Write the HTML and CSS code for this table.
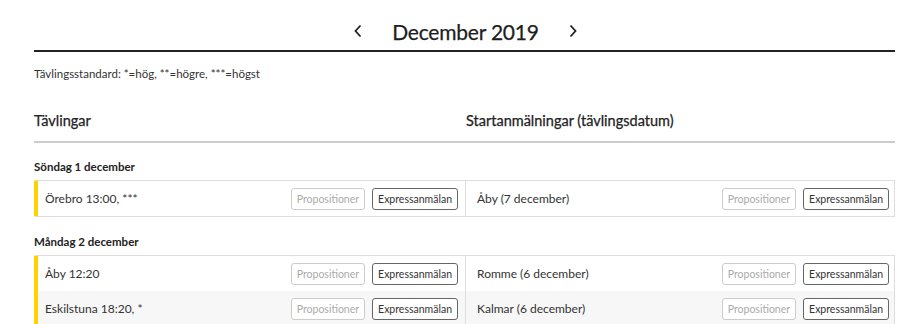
FILE: index.html
```html
<!DOCTYPE html>
<html lang="sv">
<head>
<meta charset="utf-8">
<link rel="stylesheet" href="styles.css">
</head>
<body>
<div class="page">
  <div class="month-nav">
    <span class="chev"><svg width="10" height="14" viewBox="0 0 10 14"><path d="M7.5 1.5 L2.5 7 L7.5 12.5" fill="none" stroke="#222" stroke-width="1.8"/></svg></span>
    <h1 class="month">December 2019</h1>
    <span class="chev"><svg width="10" height="14" viewBox="0 0 10 14"><path d="M2.5 1.5 L7.5 7 L2.5 12.5" fill="none" stroke="#222" stroke-width="1.8"/></svg></span>
  </div>
  <p class="legend">Tävlingsstandard: *=hög, **=högre, ***=högst</p>

  <div class="cols-head">
    <div class="col-title">Tävlingar</div>
    <div class="col-title">Startanmälningar (tävlingsdatum)</div>
  </div>

  <div class="day">Söndag 1 december</div>
  <div class="group">
    <div class="row">
      <div class="cell left"><span class="name">Örebro 13:00, ***</span><span class="btns"><span class="btn dis">Propositioner</span><span class="btn">Expressanmälan</span></span></div>
      <div class="cell right"><span class="name">Åby (7 december)</span><span class="btns"><span class="btn dis">Propositioner</span><span class="btn">Expressanmälan</span></span></div>
    </div>
  </div>

  <div class="day">Måndag 2 december</div>
  <div class="group">
    <div class="row">
      <div class="cell left"><span class="name">Åby 12:20</span><span class="btns"><span class="btn dis">Propositioner</span><span class="btn">Expressanmälan</span></span></div>
      <div class="cell right"><span class="name">Romme (6 december)</span><span class="btns"><span class="btn dis">Propositioner</span><span class="btn">Expressanmälan</span></span></div>
    </div>
    <div class="row alt">
      <div class="cell left"><span class="name">Eskilstuna 18:20, *</span><span class="btns"><span class="btn dis">Propositioner</span><span class="btn">Expressanmälan</span></span></div>
      <div class="cell right"><span class="name">Kalmar (6 december)</span><span class="btns"><span class="btn dis">Propositioner</span><span class="btn">Expressanmälan</span></span></div>
    </div>
  </div>
</div>
</body>
</html>
```
FILE: styles.css
```css
* { box-sizing: border-box; }
body {
  margin: 0;
  font-family: Lato, "Noto Sans", sans-serif;
  color: #222;
  background: #fff;
}
.page {
  margin-left: 34px;
  width: 861px;
}
.month-nav {
  height: 52px;
  border-bottom: 2px solid #222;
  display: flex;
  align-items: center;
  justify-content: center;
  gap: 29px;
  padding-top: 12px;
  padding-left: 2px;
}
.chev { display: flex; align-items: center; }
.month {
  margin: 0;
  font-size: 21px;
  font-weight: 400;
  letter-spacing: -0.2px;
  color: #1e1e1e;
  -webkit-text-stroke: 0.25px #1e1e1e;
}
.legend {
  margin: 14px 0 0;
  font-size: 11.5px;
  color: #333;
  line-height: 16px;
}
.cols-head {
  margin-top: 25px;
  display: grid;
  grid-template-columns: 432px 1fr;
  border-bottom: 2px solid #ccc;
  height: 36px;
  padding-top: 5px;
}
.col-title {
  font-size: 14.5px;
  font-weight: 400;
  color: #222;
  -webkit-text-stroke: 0.25px #222;
  letter-spacing: 0;
}
.day {
  margin-top: 16px;
  font-size: 11.5px;
  font-weight: 700;
  height: 21px;
  line-height: 16px;
}
.group {
  border: 1px solid #ddd;
  border-left: 4px solid #ffd200;
  border-radius: 2px 0 0 2px;
}
.group + .day { margin-top: 17px; }
.row {
  display: grid;
  grid-template-columns: 428px 1fr;
  height: 35px;
  background: #fff;
}
.row.alt { background: #f7f7f7; }
.cell {
  display: flex;
  align-items: center;
  justify-content: space-between;
  font-size: 12px;
  color: #333;
}
.cell.left {
  padding: 0 7px 0 7px;
  border-right: 1px solid #ddd;
}
.cell.right {
  padding: 0 5px 0 11px;
}
.btns { display: flex; gap: 7px; }
.btn {
  display: inline-flex;
  align-items: center;
  justify-content: center;
  height: 22px;
  padding: 0 5px;
  border: 1px solid #666;
  border-radius: 3px;
  font-size: 10.5px;
  color: #333;
  background: #fff;
}
.btn.dis {
  border-color: #ccc;
  color: #aaa;
}
```
